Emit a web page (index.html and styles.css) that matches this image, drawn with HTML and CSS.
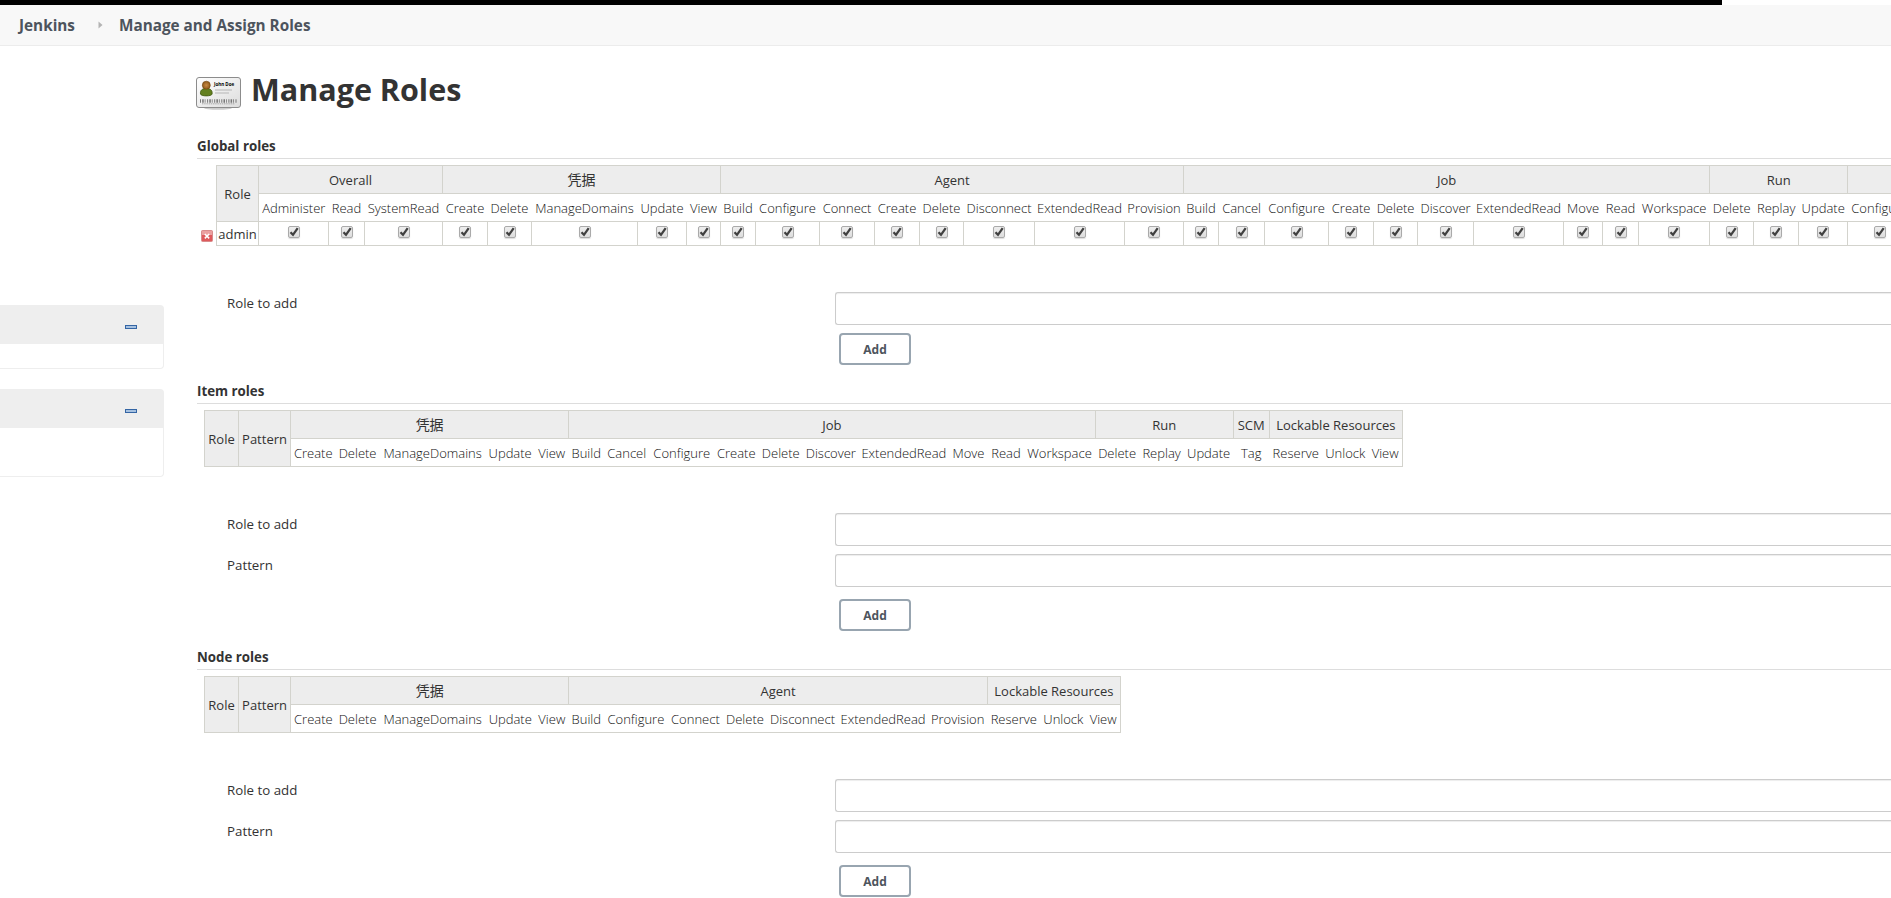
FILE: index.html
```
<!doctype html>
<html lang="zh">
  <head>
    <meta charset="UTF-8" />
    <title>Manage and Assign Roles [Jenkins]</title>
    <link rel="stylesheet" href="styles.css">
  </head>
  <body>
    <div class="progress"></div>
    <div class="breadcrumbs">
      <a>Jenkins</a>
      <svg class="chevron" width="5" height="8" viewBox="0 0 5 8"><path d="M0.5 0.5L4.5 4L0.5 7.5Z" fill="#b4b4b4" /></svg>
      <a>Manage and Assign Roles</a>
    </div>

    <div class="page">
      <div class="side">
        <div class="pane">
          <div class="pane-header"><span class="collapse"></span></div>
          <div class="pane-body"></div>
        </div>
        <div class="pane">
          <div class="pane-header"><span class="collapse"></span></div>
          <div class="pane-body tall"></div>
        </div>
      </div>

      <div class="main">
        <h1>
          <svg class="card-icon" width="48" height="48" viewBox="0 0 48 48">
            <defs>
              <linearGradient id="card" x1="0" y1="0" x2="1" y2="1">
                <stop offset="0" stop-color="#fff" />
                <stop offset="1" stop-color="#dcdcdc" />
              </linearGradient>
              <radialGradient id="face">
                <stop offset="0" stop-color="#c98a45" />
                <stop offset="1" stop-color="#8f5a1a" />
              </radialGradient>
            </defs>
            <ellipse cx="24" cy="38" rx="14" ry="1.800" fill="#ccc" />
            <rect x="2.500" y="7.500" width="44" height="30" rx="2.500" fill="url(#card)" stroke="#8c8c8c" />
            <path d="M6.500 24c-.5-4 2-5.500 5.800-5.500s6.300 1.500 5.800 5.500c-.3 2.500-11.300 2.500-11.600 0z" fill="#63801f" stroke="#3b5409" stroke-width=".8" />
            <circle cx="12.300" cy="15.200" r="4" fill="url(#face)" stroke="#74450f" stroke-width=".6" />
            <text x="20" y="16.300" class="card-name">John Doe</text>
            <path d="M21 20h17M21 23h14" stroke="#c8c8c8" stroke-width="1.700" />
            <path d="M6 31h37" stroke="#777" stroke-width="3.500" stroke-dasharray="1 1.200 1.500 1 .8 1.600" />
            <path d="M8 33.800h33" stroke="#999" stroke-width=".8" stroke-dasharray="1.500 .7" />
          </svg>
          <span>Manage Roles</span>
        </h1>

        <h2>Global roles</h2>
        <div class="global">
          <svg class="delete" width="12" height="12" viewBox="0 0 12 12">
            <rect x=".5" y=".5" width="11" height="11" rx="1" fill="#de5a5c" stroke="#d98c8c" />
            <rect x="1" y="1" width="10" height="4" fill="#eba0a0" />
            <path d="M3.800 4l4.400 4.400M8.200 4l-4.400 4.400" stroke="#fff" stroke-width="1.500" />
          </svg>
          <table class="roles global-roles">
            <colgroup>
              <col class="c-role-wide"><col class="c-administer"><col class="c-read"><col class="c-systemread">
              <col class="c-create"><col class="c-delete"><col class="c-managedomains"><col class="c-update"><col class="c-view">
              <col class="c-build"><col class="c-configure"><col class="c-connect"><col class="c-create"><col class="c-delete"><col class="c-disconnect"><col class="c-extendedread"><col class="c-provision">
              <col class="c-build"><col class="c-cancel"><col class="c-configure"><col class="c-create"><col class="c-delete"><col class="c-discover"><col class="c-extendedread"><col class="c-move"><col class="c-read"><col class="c-workspace">
              <col class="c-delete"><col class="c-replay"><col class="c-update">
              <col class="c-configure"><col class="c-create">
            </colgroup>
            <tr class="groups">
              <td rowspan="2">Role</td>
              <td colspan="3">Overall</td>
              <td colspan="5" class="zh">凭据</td>
              <td colspan="8">Agent</td>
              <td colspan="10">Job</td>
              <td colspan="3">Run</td>
              <td colspan="2"></td>
            </tr>
            <tr class="verbs">
              <th>Administer</th><th>Read</th><th>SystemRead</th>
              <th>Create</th><th>Delete</th><th>ManageDomains</th><th>Update</th><th>View</th>
              <th>Build</th><th>Configure</th><th>Connect</th><th>Create</th><th>Delete</th><th>Disconnect</th><th>ExtendedRead</th><th>Provision</th>
              <th>Build</th><th>Cancel</th><th>Configure</th><th>Create</th><th>Delete</th><th>Discover</th><th>ExtendedRead</th><th>Move</th><th>Read</th><th>Workspace</th>
              <th>Delete</th><th>Replay</th><th>Update</th>
              <th>Configure</th><th></th>
            </tr>
            <tr class="permissions">
              <td class="name">admin</td>
            </tr>
          </table>
        </div>
        <div class="form">
          <div class="field"><label>Role to add</label><input type="text"></div>
          <button>Add</button>
        </div>

        <h2>Item roles</h2>
        <table class="roles item-roles">
          <colgroup>
            <col class="c-role"><col class="c-pattern">
            <col class="c-create"><col class="c-delete"><col class="c-managedomains"><col class="c-update"><col class="c-view">
            <col class="c-build"><col class="c-cancel"><col class="c-configure"><col class="c-create"><col class="c-delete"><col class="c-discover"><col class="c-extendedread"><col class="c-move"><col class="c-read"><col class="c-workspace">
            <col class="c-delete"><col class="c-replay"><col class="c-update">
            <col class="c-tag">
            <col class="c-reserve"><col class="c-unlock"><col class="c-view">
          </colgroup>
          <tr class="groups">
            <td rowspan="2">Role</td>
            <td rowspan="2">Pattern</td>
            <td colspan="5" class="zh">凭据</td>
            <td colspan="10">Job</td>
            <td colspan="3">Run</td>
            <td>SCM</td>
            <td colspan="3">Lockable Resources</td>
          </tr>
          <tr class="verbs">
            <th>Create</th><th>Delete</th><th>ManageDomains</th><th>Update</th><th>View</th>
            <th>Build</th><th>Cancel</th><th>Configure</th><th>Create</th><th>Delete</th><th>Discover</th><th>ExtendedRead</th><th>Move</th><th>Read</th><th>Workspace</th>
            <th>Delete</th><th>Replay</th><th>Update</th>
            <th>Tag</th>
            <th>Reserve</th><th>Unlock</th><th>View</th>
          </tr>
        </table>
        <div class="form two">
          <div class="field"><label>Role to add</label><input type="text"></div>
          <div class="field"><label>Pattern</label><input type="text"></div>
          <button>Add</button>
        </div>

        <h2>Node roles</h2>
        <table class="roles node-roles">
          <colgroup>
            <col class="c-role"><col class="c-pattern">
            <col class="c-create"><col class="c-delete"><col class="c-managedomains"><col class="c-update"><col class="c-view">
            <col class="c-build"><col class="c-configure"><col class="c-connect"><col class="c-delete"><col class="c-disconnect"><col class="c-extendedread"><col class="c-provision">
            <col class="c-reserve"><col class="c-unlock"><col class="c-view">
          </colgroup>
          <tr class="groups">
            <td rowspan="2">Role</td>
            <td rowspan="2">Pattern</td>
            <td colspan="5" class="zh">凭据</td>
            <td colspan="7">Agent</td>
            <td colspan="3">Lockable Resources</td>
          </tr>
          <tr class="verbs">
            <th>Create</th><th>Delete</th><th>ManageDomains</th><th>Update</th><th>View</th>
            <th>Build</th><th>Configure</th><th>Connect</th><th>Delete</th><th>Disconnect</th><th>ExtendedRead</th><th>Provision</th>
            <th>Reserve</th><th>Unlock</th><th>View</th>
          </tr>
        </table>
        <div class="form two">
          <div class="field"><label>Role to add</label><input type="text"></div>
          <div class="field"><label>Pattern</label><input type="text"></div>
          <button>Add</button>
        </div>
      </div>
    </div>

    <script>
      // every permission is granted to admin
      const row = document.querySelector(".permissions");
      const count = document.querySelectorAll(".global-roles .verbs th").length;
      for (let i = 0; i < count; i++) {
        const cell = row.insertCell();
        cell.innerHTML =
          '<span class="check"><svg width="10" height="10" viewBox="0 0 10 10">' +
          '<path d="M1.500 5.200L4 7.800L8.700 1.200" fill="none" stroke="#404040" stroke-width="2.300"/></svg></span>';
      }
    </script>
  </body>
</html>
```
FILE: styles.css
```
* {
  box-sizing: border-box;
}

body {
  margin: 0;
  width: 1891px;
  height: 898px;
  overflow: hidden;
  background: #fff;
  color: #333;
  font-family: "Open Sans", "Noto Sans", "Noto Sans CJK SC", sans-serif;
  font-size: 13px;
}

.progress {
  width: 1722px;
  height: 5px;
  background: #000;
}

.breadcrumbs {
  display: flex;
  align-items: center;
  height: 41px;
  padding: 0 0 1px 19px;
  background: #f8f8f8;
  border-bottom: 1px solid #ececec;
  color: #4d545d;
  font-size: 15.3px;
  font-weight: 700;
}

.chevron {
  margin: 0 16px 0 23px;
}

.page {
  display: flex;
}

.side {
  width: 164px;
  padding-top: 259px;
  flex-shrink: 0;
}

.pane {
  margin-bottom: 20px;
  border: 1px solid #eee;
  border-left: none;
  border-radius: 0 4px 4px 0;
}

.pane-header {
  display: flex;
  justify-content: flex-end;
  height: 38px;
  padding: 19px 26px 0 0;
  background: #eee;
}

.collapse {
  width: 12px;
  height: 4px;
  border: 1px solid #3465a4;
  background: #a6c1e0;
}

.pane-body {
  height: 24px;
}

.pane-body.tall {
  height: 48px;
}

.main {
  flex: 1;
  min-width: 0;
  padding-left: 33px;
}

h1 {
  display: flex;
  align-items: center;
  height: 48px;
  margin: 22px 0 0 -3px;
  font-size: 30.5px;
  font-weight: 700;
  line-height: 40px;
  gap: 9px;
}

h1 span {
  padding-bottom: 6px;
}

.card-icon {
  margin-top: 4px;
}

.card-name {
  font-size: 4.5px;
  font-weight: 700;
}

h2 {
  height: 23px;
  margin: 20px 0 6px;
  border-bottom: 1px solid #ddd;
  font-size: 13.3px;
  font-weight: 700;
  line-height: 20px;
}

.global {
  display: flex;
  align-items: flex-end;
}

.delete {
  flex-shrink: 0;
  margin: 0 3px 4px 4px;
}

.roles {
  flex-shrink: 0;
  table-layout: fixed;
  border-collapse: collapse;
  margin-left: 7px;
}

.global-roles {
  width: 1741px;
  margin-left: 0;
}

.item-roles {
  width: 1199px;
}

.node-roles {
  width: 917px;
}

.roles td,
.roles th {
  padding: 0;
  text-align: center;
  white-space: nowrap;
}

.groups td {
  height: 28px;
  border: 1px solid #d3d3cd;
  background: #ededed;
}

.groups .zh {
  font-size: 14px;
  line-height: 18px;
}

.verbs {
  border-bottom: 1px solid #d3d3cd;
  border-right: 1px solid #d3d3cd;
}

.verbs th {
  height: 28px;
  color: #111;
  font-weight: 300;
}

.permissions td {
  height: 24px;
  border: 1px solid #d3d3cd;
  vertical-align: top;
}

.permissions .name {
  vertical-align: middle;
}

.check {
  display: inline-block;
  width: 12px;
  height: 12px;
  margin-top: 4px;
  border: 1px solid #aaa;
  border-radius: 2px;
  background: linear-gradient(#eee, #ddd);
  box-shadow: 0 1px 1px #ddd;
}

.check svg {
  display: block;
}

.form {
  height: 115px;
  padding-top: 46px;
}

.form.two {
  height: 160px;
}

.field {
  display: flex;
  height: 41px;
}

.field label {
  width: 638px;
  padding-left: 30px;
  font-size: 13.3px;
  line-height: 23px;
}

.field input {
  flex: 1;
  height: 33px;
  border: 1px solid #ccc;
  border-right: none;
  border-radius: 3px 0 0 3px;
  box-shadow: inset 0 1px 1px rgba(0, 0, 0, 0.075);
}

button {
  display: block;
  width: 72px;
  height: 32px;
  margin-left: 642px;
  border: 2px solid #98a5b0;
  border-radius: 4px;
  background: #fff;
  color: #4d545d;
  font-family: inherit;
  font-size: 12px;
  font-weight: 700;
}

.two button {
  margin-top: 4px;
}

.c-role { width: 34px; }
.c-role-wide { width: 42px; }
.c-pattern { width: 52px; }
.c-administer { width: 70px; }
.c-read { width: 36px; }
.c-systemread { width: 78px; }
.c-create { width: 45px; }
.c-delete { width: 44px; }
.c-managedomains { width: 106px; }
.c-update { width: 49px; }
.c-view { width: 34px; }
.c-build { width: 35px; }
.c-configure { width: 64px; }
.c-connect { width: 55px; }
.c-disconnect { width: 71px; }
.c-extendedread { width: 90px; }
.c-provision { width: 59px; }
.c-cancel { width: 46px; }
.c-discover { width: 56px; }
.c-move { width: 39px; }
.c-workspace { width: 71px; }
.c-replay { width: 45px; }
.c-tag { width: 36px; }
.c-reserve { width: 53px; }
.c-unlock { width: 46px; }
```
